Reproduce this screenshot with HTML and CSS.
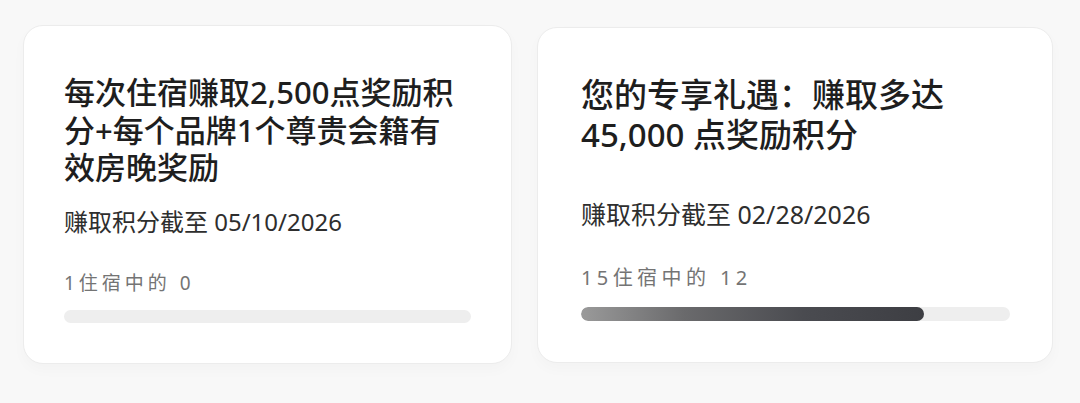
FILE: index.html
```html
<!DOCTYPE html>
<html lang="zh-CN">
<head>
<meta charset="utf-8">
<title>奖励活动</title>
<link rel="stylesheet" href="styles.css">
</head>
<body>
<main class="offers">
  <section class="card">
    <h2 class="card-title">每次住宿赚取2,500点奖励积分+每个品牌1个尊贵会籍有效房晚奖励</h2>
    <div class="card-footer">
      <p class="card-date">赚取积分截至 05/10/2026</p>
      <p class="card-progress-label">1住宿中的 0</p>
      <div class="bar"><div class="bar-fill" style="width:0%"></div></div>
    </div>
  </section>
  <section class="card card--large">
    <h2 class="card-title">您的专享礼遇：赚取多达 45,000 点奖励积分</h2>
    <div class="card-footer">
      <p class="card-date">赚取积分截至 02/28/2026</p>
      <p class="card-progress-label">15住宿中的 12</p>
      <div class="bar"><div class="bar-fill" style="width:80%"></div></div>
    </div>
  </section>
</main>
</body>
</html>
```

FILE: styles.css
```css
* { box-sizing: border-box; }

html, body {
  margin: 0;
  padding: 0;
  background: #f8f8f8;
  font-family: "Noto Sans", "Noto Sans CJK SC", sans-serif;
}

.offers {
  display: flex;
  gap: 25px;
  padding: 25px 0 0 23px;
  height: 403px;
  align-items: flex-start;
}

.card {
  --title-size: 31px;
  --title-lh: 37.5px;
  --title-pad: 12px;
  --date-size: 24px;
  --date-lh: 30px;
  --label-size: 19px;
  --label-lh: 24px;
  --label-ls: 4px;
  --label-gap: 34px;
  --bar-gap: 15px;
  --bar-h: 13px;
  width: 489px;
  height: 339px;
  display: flex;
  flex-direction: column;
  background: #fff;
  border: 1px solid #ececec;
  border-radius: 20px;
  box-shadow: 0 6px 14px rgba(0, 0, 0, 0.025);
  padding: 48px 40px 40px 40px;
}

.card--large {
  --title-size: 33px;
  --title-lh: 40px;
  --title-pad: 0px;
  --date-size: 25px;
  --date-lh: 32px;
  --label-size: 20px;
  --label-lh: 25px;
  --label-ls: 4.4px;
  --label-gap: 35px;
  --bar-gap: 17px;
  --bar-h: 14px;
  width: 516px;
  height: 336px;
  margin-top: 2px;
  padding: 47px 42px 41px 43px;
}

.card-title {
  margin: 0;
  padding-right: var(--title-pad);
  font-size: var(--title-size);
  line-height: var(--title-lh);
  font-weight: 500;
  color: #1e1e1e;
}

.card-footer {
  margin-top: auto;
  display: flex;
  flex-direction: column;
}

.card-date {
  margin: 0;
  font-size: var(--date-size);
  line-height: var(--date-lh);
  font-weight: 400;
  color: #2e2e2e;
}

.card-progress-label {
  margin: var(--label-gap) 0 0 0;
  font-size: var(--label-size);
  line-height: var(--label-lh);
  letter-spacing: var(--label-ls);
  font-weight: 400;
  color: #747474;
}

.bar {
  margin-top: var(--bar-gap);
  height: var(--bar-h);
  border-radius: 999px;
  background: #eeeeee;
  overflow: hidden;
}

.bar-fill {
  height: 100%;
  border-radius: 999px;
  background: linear-gradient(90deg, #9a9a9a 0%, #6a6a6c 30%, #4a4b50 65%, #3d3e43 100%);
}
```
